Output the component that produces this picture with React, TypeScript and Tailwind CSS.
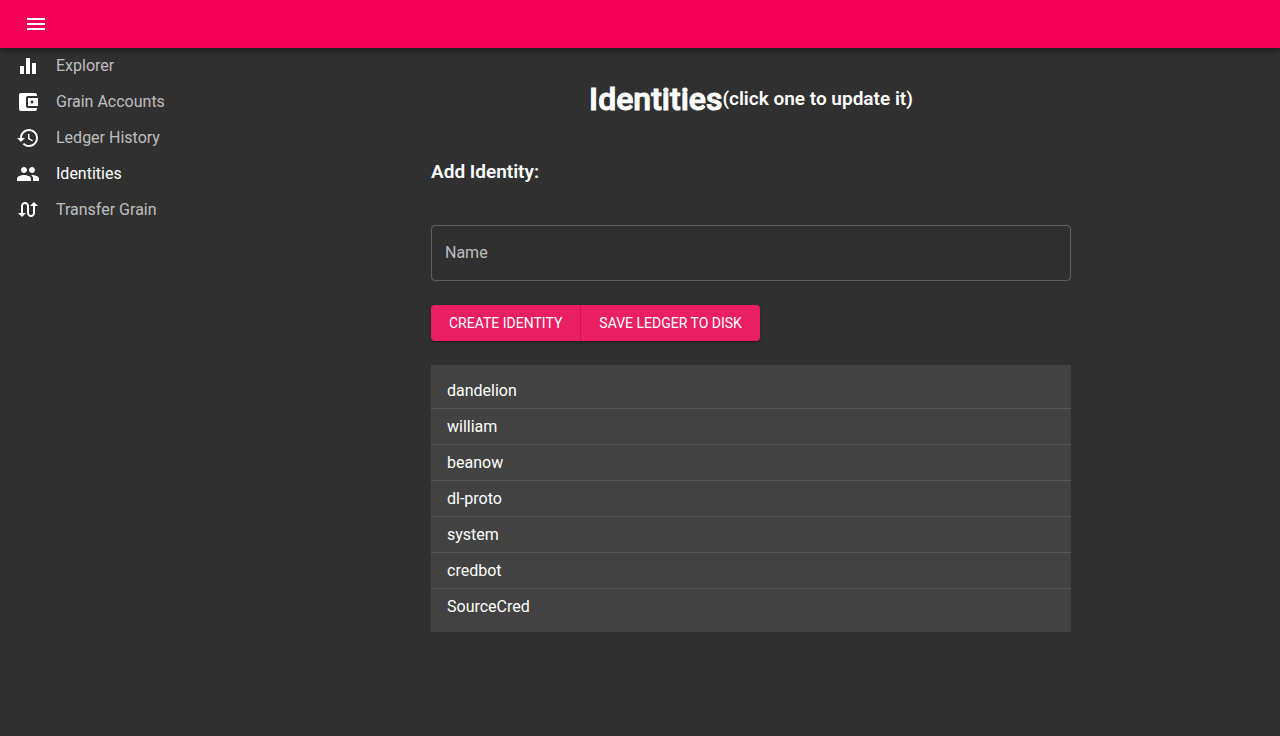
import { useState } from "react";

const icons = {
  menu: "M3 18h18v-2H3v2zm0-5h18v-2H3v2zm0-7v2h18V6H3z",
  equalizer: "M10 20h4V4h-4v16zm-6 0h4v-8H4v8zM16 9v11h4V9h-4z",
  wallet:
    "M21 18v1c0 1.1-.9 2-2 2H5c-1.11 0-2-.9-2-2V5c0-1.1.89-2 2-2h14c1.1 0 2 .9 2 2v1h-9c-1.11 0-2 .9-2 2v8c0 1.1.89 2 2 2h9zm-9-2h10V8H12v8zm4-2.5c-.83 0-1.5-.67-1.5-1.5s.67-1.5 1.5-1.5 1.5.67 1.5 1.5-.67 1.5-1.5 1.5z",
  history:
    "M13 3c-4.97 0-9 4.03-9 9H1l3.89 3.89.07.14L9 12H6c0-3.87 3.13-7 7-7s7 3.13 7 7-3.13 7-7 7c-1.93 0-3.68-.79-4.94-2.06l-1.42 1.42C8.27 19.99 10.51 21 13 21c4.97 0 9-4.03 9-9s-4.03-9-9-9zm-1 5v5l4.28 2.54.72-1.21-3.5-2.08V8H12z",
  people:
    "M16 11c1.66 0 2.99-1.34 2.99-3S17.66 5 16 5c-1.66 0-3 1.34-3 3s1.34 3 3 3zm-8 0c1.66 0 2.99-1.34 2.99-3S9.66 5 8 5C6.34 5 5 6.34 5 8s1.34 3 3 3zm0 2c-2.33 0-7 1.17-7 3.5V19h14v-2.5c0-2.33-4.67-3.5-7-3.5zm8 0c-.29 0-.62.02-.97.05 1.16.84 1.97 1.97 1.97 3.45V19h6v-2.5c0-2.33-4.67-3.5-7-3.5z",
  swap: "M18 4l-4 4h3v7c0 1.1-.9 2-2 2s-2-.9-2-2V8c0-2.21-1.79-4-4-4S5 5.79 5 8v7H2l4 4 4-4H7V8c0-1.1.9-2 2-2s2 .9 2 2v7c0 2.21 1.79 4 4 4s4-1.79 4-4V8h3l-4-4z",
};

type IconName = keyof typeof icons;

function Icon({ name }: { name: IconName }) {
  return (
    <svg viewBox="0 0 24 24" aria-hidden="true" className="size-6 shrink-0 fill-white">
      <path d={icons[name]} />
    </svg>
  );
}

const navItems: { label: string; icon: IconName; active?: boolean }[] = [
  { label: "Explorer", icon: "equalizer" },
  { label: "Grain Accounts", icon: "wallet" },
  { label: "Ledger History", icon: "history" },
  { label: "Identities", icon: "people", active: true },
  { label: "Transfer Grain", icon: "swap" },
];

const initialIdentities = [
  "dandelion",
  "william",
  "beanow",
  "dl-proto",
  "system",
  "credbot",
  "SourceCred",
];

function AppBar() {
  return (
    <header className="z-10 flex h-12 items-center bg-[#f50057] px-6 shadow-[0_2px_4px_-1px_rgba(0,0,0,0.2),0_4px_5px_0_rgba(0,0,0,0.14),0_1px_10px_0_rgba(0,0,0,0.12)]">
      <button type="button" aria-label="Menu">
        <Icon name="menu" />
      </button>
    </header>
  );
}

function Sidebar() {
  return (
    <nav className="w-[222px] shrink-0">
      <ul>
        {navItems.map(({ label, icon, active }) => (
          <li key={label}>
            <a
              href="#"
              aria-current={active ? "page" : undefined}
              className="flex h-9 items-center gap-4 px-4"
            >
              <Icon name={icon} />
              <span className={active ? "text-white" : "text-white/70"}>{label}</span>
            </a>
          </li>
        ))}
      </ul>
    </nav>
  );
}

export default function App() {
  const [name, setName] = useState("");
  const [identities, setIdentities] = useState(initialIdentities);

  const createIdentity = () => {
    if (name.trim()) {
      setIdentities([...identities, name.trim()]);
      setName("");
    }
  };

  return (
    <div className="flex min-h-screen flex-col bg-[#303030] font-[Roboto,sans-serif] text-base text-white">
      <AppBar />
      <div className="flex flex-1">
        <Sidebar />
        <main className="flex flex-1 justify-center">
          <div className="w-full max-w-[640px] pt-8">
            <div className="flex items-center justify-center">
              <h1 className="text-[32px] leading-[38px] font-medium [-webkit-text-stroke:1px_white]">
                Identities
              </h1>
              <h2 className="text-[19px] leading-6 font-semibold">(click one to update it)</h2>
            </div>
            <h3 className="mt-[42px] text-[19px] leading-6 font-semibold">Add Identity:</h3>
            <div className="relative mt-[41px]">
              <input
                id="identity-name"
                type="text"
                value={name}
                onChange={(event) => setName(event.target.value)}
                className="peer block h-14 w-full rounded border border-white/23 bg-transparent px-3.5 outline-none focus:border-[#f50057]"
              />
              <label
                htmlFor="identity-name"
                className={
                  name
                    ? "absolute -top-2 left-2.5 bg-[#303030] px-1 text-xs text-white/70"
                    : "absolute top-4 left-3.5 text-white/70 peer-focus:-top-2 peer-focus:left-2.5 peer-focus:bg-[#303030] peer-focus:px-1 peer-focus:text-xs"
                }
              >
                Name
              </label>
            </div>
            <div className="mt-6 flex w-fit rounded bg-[#e91e63] text-sm leading-6 shadow-[0_3px_1px_-2px_rgba(0,0,0,0.2),0_2px_2px_0_rgba(0,0,0,0.14),0_1px_5px_0_rgba(0,0,0,0.12)]">
              <button
                type="button"
                onClick={createIdentity}
                className="border-r border-[#c2185b] px-[18px] py-1.5 uppercase"
              >
                Create Identity
              </button>
              <button type="button" className="px-[18px] py-1.5 uppercase">
                Save ledger to disk
              </button>
            </div>
            <ul className="mt-6 divide-y divide-white/12 bg-[#424242] py-2">
              {identities.map((identity) => (
                <li key={identity}>
                  <button type="button" className="flex h-[35px] w-full items-center px-4">
                    {identity}
                  </button>
                </li>
              ))}
            </ul>
          </div>
        </main>
      </div>
    </div>
  );
}
